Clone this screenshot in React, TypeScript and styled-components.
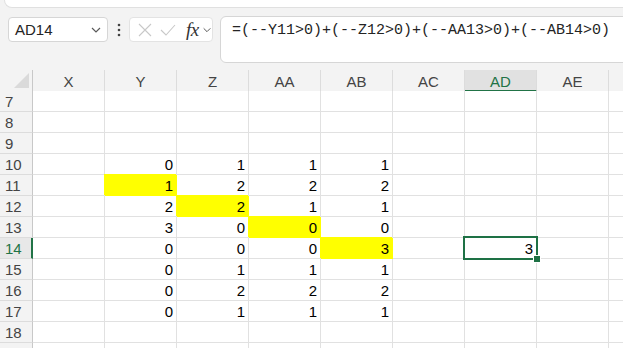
import { Fragment } from "react";
import styled, { createGlobalStyle } from "styled-components";

const GlobalStyle = createGlobalStyle`
  html, body {
    margin: 0;
    padding: 0;
    background: #f3f3f3;
    font-family: "Liberation Sans", Arial, sans-serif;
    overflow: hidden;
  }
`;

const Page = styled.div`
  width: 623px;
  height: 348px;
  overflow: hidden;
  background: #f3f3f3;
`;

const RibbonEdge = styled.div`
  height: 7px;
  margin-left: 4px;
  background: #ffffff;
  border: 1px solid #e0e0e0;
  border-top: none;
  border-right: none;
  border-bottom-left-radius: 8px;
`;

const Toolbar = styled.div`
  display: flex;
  align-items: flex-start;
  padding: 8px 0 7px 8px;
  height: 47px;
`;

const NameBox = styled.div`
  width: 100px;
  height: 25px;
  margin-top: 1px;
  box-sizing: border-box;
  background: #ffffff;
  border: 1px solid #d6d6d6;
  border-radius: 4px;
  display: flex;
  align-items: center;
  justify-content: space-between;
  padding: 0 5px 0 6px;
  font-size: 15px;
  color: #242424;
`;

const Dots = styled.div`
  width: 21px;
  height: 26px;
  display: flex;
  align-items: center;
  justify-content: center;
  margin-top: 1px;
`;

const FxGroup = styled.div`
  width: 84px;
  height: 25px;
  margin-top: 1px;
  box-sizing: border-box;
  background: #ffffff;
  border: 1px solid #e3e3e3;
  border-radius: 4px;
  display: flex;
  align-items: center;
  padding: 0 0 0 4px;
`;

const IconSlot = styled.span<{ $w: number }>`
  width: ${(p) => p.$w}px;
  display: flex;
  align-items: center;
  justify-content: center;
`;

const FxLabel = styled.span`
  font-family: "Liberation Serif", "Times New Roman", serif;
  font-style: italic;
  font-size: 19px;
  line-height: 20px;
  color: #333333;
  width: 20px;
  text-align: center;
  margin-left: 2px;
  letter-spacing: -0.5px;
`;

const FormulaBar = styled.div`
  flex: 1;
  height: 47px;
  margin-left: 7px;
  margin-right: -10px;
  box-sizing: border-box;
  background: #ffffff;
  border: 1px solid #d6d6d6;
  border-radius: 6px;
  padding: 4px 11px;
  font-family: "Liberation Mono", "Courier New", monospace;
  font-size: 15px;
  line-height: 20px;
  color: #242424;
  white-space: nowrap;
`;

const Sheet = styled.div`
  display: grid;
  grid-template-columns: 33px repeat(9, 72px);
  grid-auto-rows: 21px;
  background: #ffffff;
`;

const Corner = styled.div`
  height: 22px;
  box-sizing: border-box;
  background: #f3f3f3;
  border-right: 1px solid #c8c8c8;
  border-bottom: 1px solid #c8c8c8;
  display: flex;
  align-items: flex-end;
  justify-content: flex-end;
  padding: 0 3px 3px 0;
`;

const ColHead = styled.div<{ $active?: boolean }>`
  height: 22px;
  box-sizing: border-box;
  background: ${(p) => (p.$active ? "#e1e1e1" : "#f3f3f3")};
  border-right: 1px solid #dcdcdc;
  border-bottom: ${(p) => (p.$active ? "2px solid #217346" : "1px solid #c8c8c8")};
  color: ${(p) => (p.$active ? "#217346" : "#444444")};
  font-size: 15px;
  display: flex;
  align-items: center;
  justify-content: center;
  padding-top: ${(p) => (p.$active ? "3px" : "2px")};
`;

const RowHead = styled.div<{ $active?: boolean }>`
  box-sizing: border-box;
  background: ${(p) => (p.$active ? "#e8e8e8" : "#f3f3f3")};
  border-right: ${(p) => (p.$active ? "2px solid #217346" : "1px solid #c8c8c8")};
  border-bottom: 1px solid #dcdcdc;
  color: ${(p) => (p.$active ? "#217346" : "#444444")};
  font-size: 15px;
  display: flex;
  align-items: center;
  padding-left: 5px;
`;

const Cell = styled.div<{ $fill?: boolean; $active?: boolean }>`
  position: relative;
  box-sizing: border-box;
  background: ${(p) => (p.$fill ? "#ffff00" : "#ffffff")};
  border-right: 1px solid ${(p) => (p.$fill ? "#ffff00" : "#e1e1e1")};
  border-bottom: 1px solid ${(p) => (p.$fill ? "#ffff00" : "#e1e1e1")};
  box-shadow: ${(p) => (p.$fill ? "-1px -1px 0 0 #ffff00" : "none")};
  z-index: ${(p) => (p.$active ? 3 : p.$fill ? 1 : 0)};
  font-size: 15px;
  color: #000000;
  display: flex;
  align-items: center;
  justify-content: flex-end;
  padding-right: 3px;
`;

const Selection = styled.div`
  position: absolute;
  top: -2px;
  left: -2px;
  right: -2px;
  bottom: -2px;
  border: 2px solid #1e7145;
  pointer-events: none;
`;

const Handle = styled.div`
  position: absolute;
  right: -5px;
  bottom: -5px;
  width: 6px;
  height: 6px;
  background: #1e7145;
  border: 1px solid #ffffff;
`;

const Chevron = () => (
  <svg width="12" height="8" viewBox="0 0 12 8">
    <path d="M2 2 L6 6 L10 2" fill="none" stroke="#5a5a5a" strokeWidth="1.2" />
  </svg>
);

const columns = ["X", "Y", "Z", "AA", "AB", "AC", "AD", "AE", ""];

// label omitted on the last row: only its top few pixels are in view
type Row = { n: number; label?: boolean; vals?: number[]; fill?: number; ad?: number };

const rows: Row[] = [
  { n: 7 },
  { n: 8 },
  { n: 9 },
  { n: 10, vals: [0, 1, 1, 1] },
  { n: 11, vals: [1, 2, 2, 2], fill: 0 },
  { n: 12, vals: [2, 2, 1, 1], fill: 1 },
  { n: 13, vals: [3, 0, 0, 0], fill: 2 },
  { n: 14, vals: [0, 0, 0, 3], fill: 3, ad: 3 },
  { n: 15, vals: [0, 1, 1, 1] },
  { n: 16, vals: [0, 2, 2, 2] },
  { n: 17, vals: [0, 1, 1, 1] },
  { n: 18 },
  { n: 19, label: false },
];

export default function App() {
  return (
    <Page>
      <GlobalStyle />
      <RibbonEdge />
      <Toolbar>
        <NameBox>
          <span>AD14</span>
          <Chevron />
        </NameBox>
        <Dots>
          <svg width="4" height="14" viewBox="0 0 4 14">
            <circle cx="2" cy="2" r="1.3" fill="#424242" />
            <circle cx="2" cy="7" r="1.3" fill="#424242" />
            <circle cx="2" cy="12" r="1.3" fill="#424242" />
          </svg>
        </Dots>
        <FxGroup>
          <IconSlot $w={22}>
            <svg width="14" height="14" viewBox="0 0 14 14">
              <path d="M1 1 L13 13 M13 1 L1 13" stroke="#c8c8c8" strokeWidth="1.1" />
            </svg>
          </IconSlot>
          <IconSlot $w={26}>
            <svg width="16" height="12" viewBox="0 0 16 12">
              <path d="M1 6 L6 11 L15 1" fill="none" stroke="#c8c8c8" strokeWidth="1.1" />
            </svg>
          </IconSlot>
          <FxLabel>fx</FxLabel>
          <IconSlot $w={10}>
            <Chevron />
          </IconSlot>
        </FxGroup>
        <FormulaBar>=(--Y11&gt;0)+(--Z12&gt;0)+(--AA13&gt;0)+(--AB14&gt;0)</FormulaBar>
      </Toolbar>
      <Sheet>
        <Corner>
          <svg width="15" height="15" viewBox="0 0 15 15">
            <path d="M15 0 L15 15 L0 15 Z" fill="#dadada" />
          </svg>
        </Corner>
        {columns.map((c, i) => (
          <ColHead key={i} $active={c === "AD"}>
            {c}
          </ColHead>
        ))}
        {rows.map((r) => (
          <Fragment key={r.n}>
            <RowHead $active={r.n === 14}>{r.label === false ? null : r.n}</RowHead>
            {columns.map((c, ci) => {
              const vi = ci - 1;
              const val = r.vals && vi >= 0 && vi < 4 ? r.vals[vi] : undefined;
              const isAD = c === "AD";
              const selected = isAD && r.n === 14;
              return (
                <Cell
                  key={ci}
                  $fill={r.fill !== undefined && r.fill === vi}
                  $active={selected}
                >
                  {isAD && r.ad !== undefined ? r.ad : val}
                  {selected && (
                    <Selection>
                      <Handle />
                    </Selection>
                  )}
                </Cell>
              );
            })}
          </Fragment>
        ))}
      </Sheet>
    </Page>
  );
}
